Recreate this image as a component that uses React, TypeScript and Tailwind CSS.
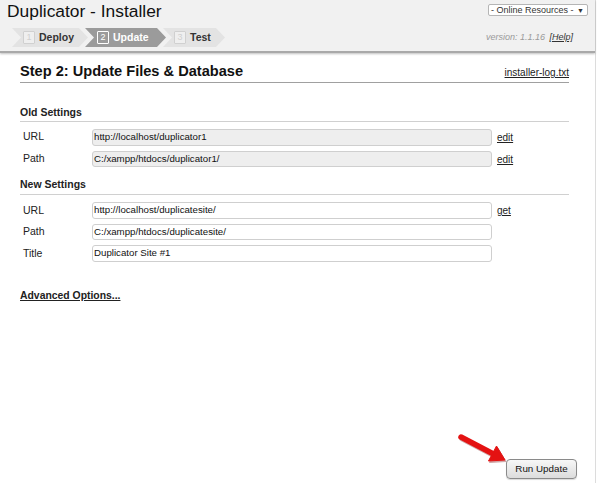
import React from "react";

const Row = ({ label, value, link, readOnly }: { label: string; value: string; link?: string; readOnly?: boolean }) => (
  <div className="flex items-center h-[16.5px]">
    <div className="w-[72px] pl-[3px] text-[10.5px] text-[#222]">{label}</div>
    <div
      className={`w-[400px] h-[16.5px] rounded-[3px] border border-[#cfcfcf] flex items-center pl-[1px] text-[9.7px] text-[#111] ${
        readOnly ? "bg-[#eeeeee]" : "bg-white"
      }`}
    >
      {value}
    </div>
    {link && <a className="ml-[5px] text-[10px] text-[#222] underline">{link}</a>}
  </div>
);

const Step = ({
  num,
  label,
  active,
  width,
  ml,
}: {
  num: string;
  label: string;
  active?: boolean;
  width: string;
  ml: string;
}) => (
  <div
    className={`${width} ${ml} h-[19px] flex items-center [clip-path:polygon(0_0,calc(100%-9px)_0,100%_50%,calc(100%-9px)_100%,0_100%,9px_50%)] ${
      active ? "bg-[#9b9b9b] pl-[12px]" : "bg-[#e3e3e3] pl-[11px]"
    }`}
  >
    <span
      className={`w-[12px] h-[13px] flex items-center justify-center text-[9px] rounded-[1px] border ${
        active ? "border-white text-white" : "border-[#d0d0d0] bg-[#efefef] text-[#d0d0d0]"
      }`}
    >
      {num}
    </span>
    <span className={`ml-[4px] text-[10.5px] font-bold ${active ? "text-white" : "text-[#333]"}`}>{label}</span>
  </div>
);

export default function App() {
  return (
    <div className="relative w-[600px] h-[483px] bg-white overflow-hidden font-['Liberation_Sans',Arial,sans-serif]">
      <div className="w-[596px] h-full border-r border-[#dcdcdc] flex flex-col">
        {/* Header */}
        <div className="h-[53px] bg-[#f1f1f1] border-b-2 border-[#a9a9a9] shadow-[0_1px_2px_rgba(0,0,0,0.25)] flex justify-between shrink-0">
          <div className="flex flex-col">
            <div className="pl-[7px] pt-[1px] text-[17.4px] leading-[20px] text-[#111]">Duplicator - Installer</div>
            <div className="flex pl-[12px] mt-[7px]">
              <Step num="1" label="Deploy" width="w-[76px]" ml="ml-0" />
              <Step num="2" label="Update" width="w-[81px]" ml="ml-[-3px]" active />
              <Step num="3" label="Test" width="w-[62px]" ml="ml-[-3px]" />
            </div>
          </div>
          <div className="flex flex-col items-end">
            <div className="mt-[4px] mr-[7px] w-[100px] h-[12px] bg-white border border-[#b5b5b5] rounded-[2px] flex items-center justify-between pl-[2px] pr-[3px] text-[9px] leading-none text-[#333]">
              <span>- Online Resources -</span>
              <span className="text-[7px]">▼</span>
            </div>
            <div className="mt-[15px] mr-[22px] text-[9px] italic text-[#9a9a9a]">
              version: 1.1.16 <span className="ml-[2px] text-[#333] underline">[Help]</span>
            </div>
          </div>
        </div>

        {/* Content */}
        <div className="flex-1 flex flex-col pl-[20px] pr-[26px]">
          <div className="mt-[9px] pb-[2px] border-b border-[#a0a0a0] flex justify-between items-baseline">
            <div className="text-[14.6px] leading-[18px] font-bold text-[#111]">Step 2: Update Files &amp; Database</div>
            <a className="text-[10px] text-[#222] underline">installer-log.txt</a>
          </div>

          <div className="mt-[23px] pb-[2px] border-b border-[#d0d0d0] text-[10.5px] leading-[13px] font-bold text-[#222]">Old Settings</div>
          <div className="mt-[7px] flex flex-col gap-[5.3px]">
            <Row label="URL" value="http://localhost/duplicator1" link="edit" readOnly />
            <Row label="Path" value="C:/xampp/htdocs/duplicator1/" link="edit" readOnly />
          </div>

          <div className="mt-[11px] pb-[3px] border-b border-[#d0d0d0] text-[10.5px] leading-[13px] font-bold text-[#222]">New Settings</div>
          <div className="mt-[7px] flex flex-col gap-[5px]">
            <Row label="URL" value="http://localhost/duplicatesite/" link="get" />
            <Row label="Path" value="C:/xampp/htdocs/duplicatesite/" />
            <Row label="Title" value="Duplicator Site #1" />
          </div>

          <a className="mt-[27px] text-[10.4px] leading-[13px] font-bold text-[#222] underline self-start">Advanced Options...</a>

          <div className="flex-1" />
          <div className="flex justify-end mb-[4px] mr-[-8px]">
            <button className="w-[71px] h-[20px] rounded-[4px] border border-[#8a8a8a] bg-gradient-to-b from-[#f7f7f7] to-[#dcdcdc] text-[9.8px] text-[#111] flex items-center justify-center shadow-[0_1px_1px_rgba(0,0,0,0.15)]">
              Run Update
            </button>
          </div>
        </div>
      </div>

      {/* Red arrow */}
      <svg className="absolute left-[455px] top-[430px]" width="56" height="38" viewBox="0 0 56 38">
        <g transform="translate(1,1.5)" fill="#7a0000" stroke="#7a0000" opacity="0.35">
          <line x1="6" y1="7" x2="38" y2="23.8" strokeWidth="5.5" strokeLinecap="round" />
          <polygon points="50,30 33.5,31 41.5,16" strokeWidth="1" />
        </g>
        <line x1="6" y1="7" x2="38" y2="23.8" stroke="#e41212" strokeWidth="5.5" strokeLinecap="round" />
        <polygon points="50,30 33.5,31 41.5,16" fill="#e41212" stroke="#e41212" strokeWidth="1" strokeLinejoin="round" />
      </svg>
    </div>
  );
}
